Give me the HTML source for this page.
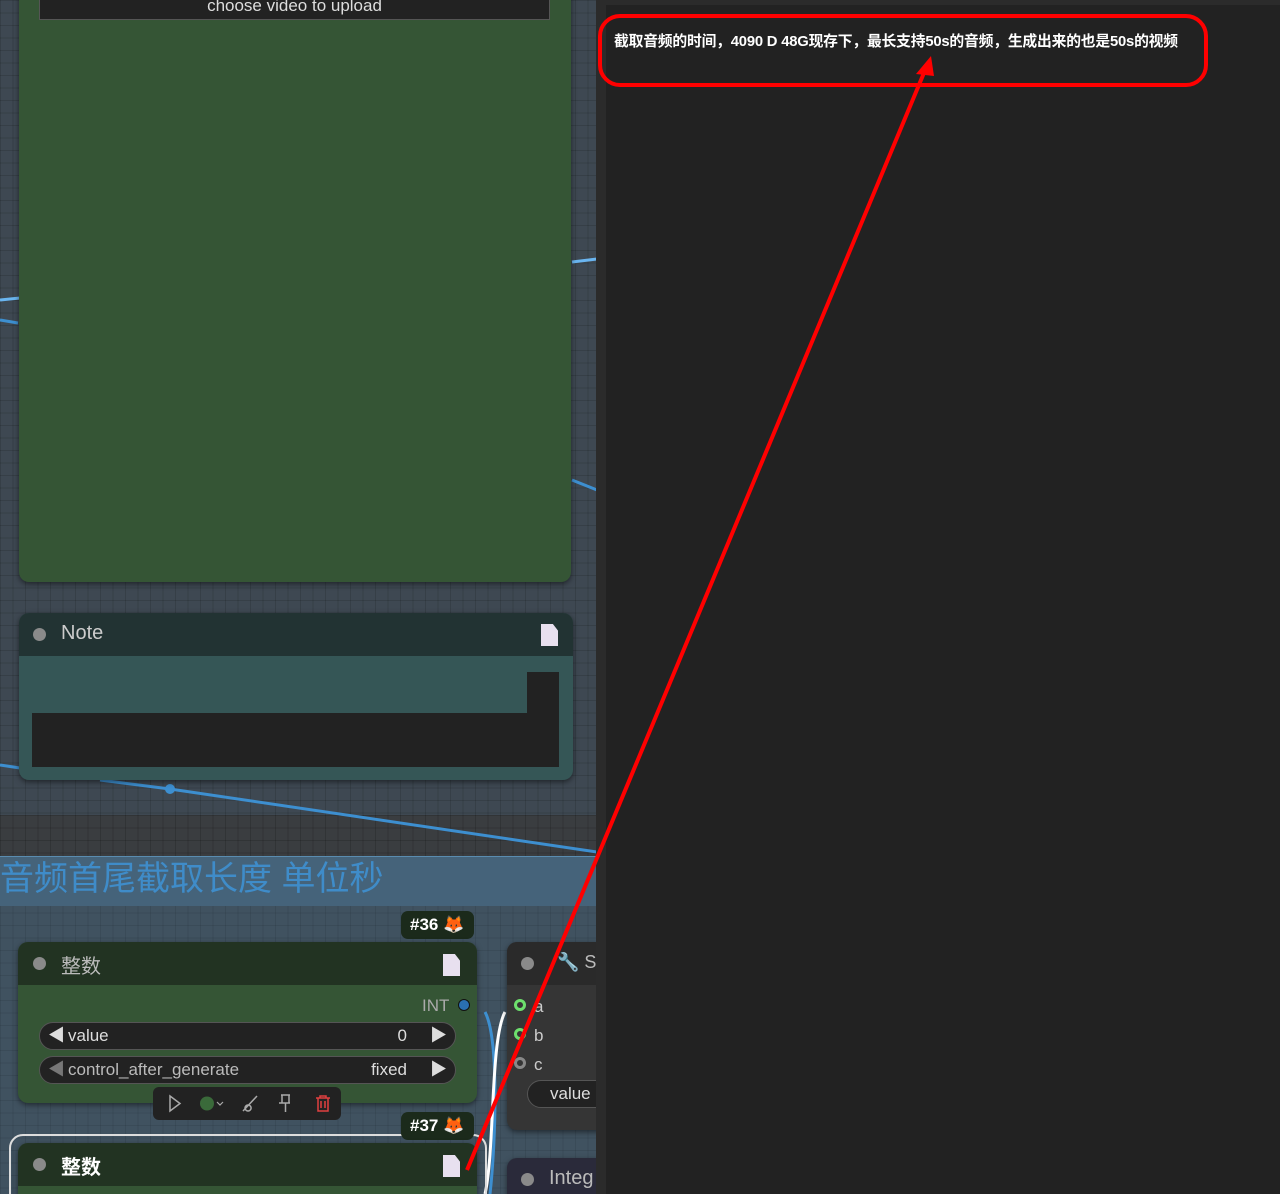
<!DOCTYPE html>
<html><head><meta charset="utf-8"><style>
*{margin:0;padding:0;box-sizing:border-box}
html,body{width:1280px;height:1194px;overflow:hidden}
body{background:#222;font-family:"Liberation Sans","Noto Sans CJK SC",sans-serif;position:relative}
.canvas{position:absolute;left:0;top:0;width:597px;height:1194px;overflow:hidden;background-color:#3e4852;
background-image:linear-gradient(rgba(0,0,0,.13) 1px,transparent 1px),linear-gradient(90deg,rgba(0,0,0,.13) 1px,transparent 1px);background-size:12.5px 12.5px}
.abs{position:absolute}
.node{position:absolute;border-radius:10px;box-shadow:0 2px 6px rgba(0,0,0,.5);overflow:hidden}
.dot{position:absolute;width:13px;height:13px;border-radius:50%;background:#8a8a8a}
.doc{position:absolute;width:17px;height:22px;background:#e8e0ef;clip-path:polygon(0 0,70% 0,100% 30%,100% 100%,0 100%)}
.pill{position:absolute;height:28px;border-radius:14px;background:#222;border:1px solid #555;color:#ddd;font-size:17px;line-height:26px}
.badge{position:absolute;height:28px;border-radius:7px;background:#1b2a1b;color:#fff;font-size:17px;font-weight:bold;line-height:28px;padding-left:9px}
</style></head><body>
<div class="canvas">
<div class="abs" style="left:0;top:815px;width:597px;height:41px;background:#3a3d40;background-image:linear-gradient(rgba(0,0,0,.15) 1px,transparent 1px),linear-gradient(90deg,rgba(0,0,0,.15) 1px,transparent 1px);background-size:12.5px 12.5px"></div>
<div class="abs" style="left:0;top:856px;width:597px;height:50px;background:#45637a;border-top:1px solid #5a8cb0"></div>
<div class="abs" style="left:0;top:906px;width:597px;height:288px;background:rgba(70,110,140,.25)"></div>
<div class="abs" style="left:0;top:857px;font-size:34px;color:#3f8cc9;line-height:44px;white-space:nowrap">音频首尾截取长度 单位秒</div>

<svg class="abs" style="left:0;top:0" width="597" height="1194">
<path d="M0 300 L20 298" stroke="#6ab5f0" stroke-width="3"/>
<path d="M0 320 L18 323" stroke="#3d8fd0" stroke-width="3"/>
<path d="M572 262 L597 259" stroke="#6ab5f0" stroke-width="3"/>
<path d="M572 480 L597 490" stroke="#3d8fd0" stroke-width="3"/>
<path d="M0 765 L20 768" stroke="#3d8fd0" stroke-width="3"/>
<path d="M100 780 L170 789 L597 852" stroke="#3d8fd0" stroke-width="3" fill="none"/>
<circle cx="170" cy="789" r="5" fill="#3d8fd0"/>
<path d="M485 1012 C500 1040 495 1150 490 1194" stroke="#3d8fd0" stroke-width="3" fill="none"/>
<path d="M505 1012 C490 1040 495 1150 485 1194" stroke="#fff" stroke-width="3" fill="none"/>
</svg>

<div class="node" style="left:19px;top:-20px;width:552px;height:602px;background:#355535">
 <div class="abs" style="left:20px;top:0;width:511px;height:40px;background:#222;border:1px solid #555"></div>
 <div class="abs" style="left:20px;top:16px;width:511px;color:#ddd;font-size:17px;text-align:center;line-height:20px">choose video to upload</div>
</div>

<div class="node" style="left:19px;top:613px;width:554px;height:167px;background:#355656">
 <div class="abs" style="left:0;top:0;width:100%;height:43px;background:#223333"></div>
 <div class="dot" style="left:14px;top:15px"></div>
 <div class="abs" style="left:42px;top:9px;color:#ccc;font-size:20px">Note</div>
 <div class="doc" style="left:522px;top:11px"></div>
 <div class="abs" style="left:13px;top:100px;width:527px;height:54px;background:#222"></div>
 <div class="abs" style="left:508px;top:59px;width:32px;height:45px;background:#222"></div>
</div>

<div class="badge" style="left:401px;top:911px;width:73px">#36 <span style="color:#e88a3a">🦊</span></div>
<div class="node" style="left:18px;top:942px;width:459px;height:161px;background:#355535">
 <div class="abs" style="left:0;top:0;width:100%;height:43px;background:#223322"></div>
 <div class="dot" style="left:15px;top:15px"></div>
 <div class="abs" style="left:43px;top:8px;color:#bbb;font-size:20px">整数</div>
 <div class="doc" style="left:425px;top:12px"></div>
 <div class="abs" style="left:404px;top:54px;color:#aaa;font-size:17px">INT</div>
 <div class="abs" style="left:440px;top:57px;width:12px;height:12px;border-radius:50%;background:#2a6fb0;border:1.5px solid #111"></div>
 <div class="pill" style="left:21px;top:80px;width:417px"><span style="position:absolute;left:8px">◀</span><span style="position:absolute;left:28px">value</span><span style="position:absolute;right:48px">0</span><span style="position:absolute;right:8px">▶</span></div>
 <div class="pill" style="left:21px;top:114px;width:417px"><span style="position:absolute;left:8px;color:#777">◀</span><span style="position:absolute;left:28px;color:#bbb">control_after_generate</span><span style="position:absolute;right:48px">fixed</span><span style="position:absolute;right:8px">▶</span></div>
</div>
<div class="abs" style="left:153px;top:1087px;width:188px;height:33px;background:#222;border-radius:6px">
 <svg width="188" height="33"><path d="M17 9 L27 16.5 L17 24 Z" fill="none" stroke="#aaa" stroke-width="1.5"/>
 <circle cx="54" cy="16.5" r="7" fill="#3a6a3a"/><path d="M64 15 l3 3 l3 -3" fill="none" stroke="#aaa" stroke-width="1.2"/>
 <path d="M90 24 L104 9 M95 18 a3 3 0 1 0 0.1 0" stroke="#aaa" stroke-width="1.5" fill="none"/>
 <path d="M128 8 h9 M129 8 v8 h7 v-8 M126 16 h11 M132.5 16 v9" stroke="#aaa" stroke-width="1.5" fill="none"/>
 <path d="M163 11 h14 M167 11 v-2 h6 v2 M165 11 v13 h10 v-13 M168 14 v7 M172 14 v7" stroke="#e04040" stroke-width="1.5" fill="none"/></svg>
</div>

<div class="abs" style="left:9px;top:1134px;width:478px;height:80px;border:2px solid #ddd;border-radius:14px"></div>
<div class="badge" style="left:401px;top:1112px;width:73px">#37 <span style="color:#e88a3a">🦊</span></div>
<div class="node" style="left:18px;top:1143px;width:459px;height:70px;background:#355535">
 <div class="abs" style="left:0;top:0;width:100%;height:43px;background:#223322"></div>
 <div class="dot" style="left:15px;top:15px"></div>
 <div class="abs" style="left:43px;top:8px;color:#fff;font-size:20px;font-weight:bold">整数</div>
 <div class="doc" style="left:425px;top:12px"></div>
</div>

<div class="node" style="left:507px;top:942px;width:120px;height:188px;background:#353535">
 <div class="abs" style="left:0;top:0;width:100%;height:43px;background:#2a2a2a"></div>
 <div class="dot" style="left:14px;top:15px"></div>
 <div class="abs" style="left:50px;top:10px;color:#bbb;font-size:18px">🔧 S</div>
 <div class="abs" style="left:7px;top:57px;width:12px;height:12px;border-radius:50%;border:3px solid #6de06d"></div>
 <div class="abs" style="left:7px;top:86px;width:12px;height:12px;border-radius:50%;border:3px solid #6de06d"></div>
 <div class="abs" style="left:7px;top:115px;width:12px;height:12px;border-radius:50%;border:3px solid #888"></div>
 <div class="abs" style="left:27px;top:50px;color:#ccc;font-size:17px;line-height:29px">a<br>b<br>c</div>
 <div class="pill" style="left:20px;top:138px;width:120px;padding-left:22px">value</div>
</div>
<div class="node" style="left:507px;top:1158px;width:120px;height:60px;background:#2a2a3a">
 <div class="dot" style="left:14px;top:15px"></div>
 <div class="abs" style="left:42px;top:9px;color:#bbb;font-size:20px">Integ</div>
</div>
</div>

<div class="abs" style="left:596px;top:0;width:10px;height:1194px;background:#2b2b2b"></div>
<div class="abs" style="left:606px;top:0;width:674px;height:5px;background:#2b2b2b"></div>
<div class="abs" style="left:614px;top:30px;color:#fff;font-size:14.8px;font-weight:bold;letter-spacing:-0.2px;white-space:nowrap">截取音频的时间，4090 D 48G现存下，最长支持50s的音频，生成出来的也是50s的视频</div>
<svg class="abs" style="left:0;top:0" width="1280" height="1194">
<rect x="600" y="16" width="606" height="69" rx="20" fill="none" stroke="#f00" stroke-width="4"/>
<path d="M467 1170 L926 68" stroke="#f00" stroke-width="4"/>
<path d="M931 56 L916 74 L934 76 Z" fill="#f00"/>
</svg>
</body></html>
